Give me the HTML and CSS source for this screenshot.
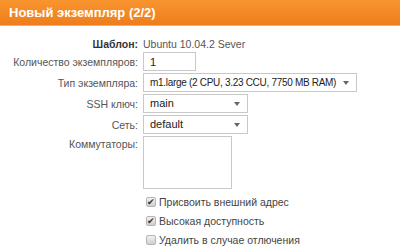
FILE: index.html
```html
<!DOCTYPE html>
<html lang="ru">
<head>
  <meta charset="utf-8">
  <title>Новый экземпляр</title>
  <link rel="stylesheet" href="styles.css">
</head>
<body>
  <div class="dialog">
    <h1 class="title">Новый экземпляр (2/2)</h1>

    <form class="form">
      <div class="row">
        <span class="label strong">Шаблон:</span>
        <span class="value">Ubuntu 10.04.2 Sever</span>
      </div>
      <div class="row">
        <label class="label" for="count">Количество экземпляров:</label>
        <input class="field count" id="count" type="text" value="1">
      </div>
      <div class="row">
        <label class="label">Тип экземпляра:</label>
        <div class="select wide">m1.large (2 CPU, 3.23 CCU, 7750 MB RAM)</div>
      </div>
      <div class="row">
        <label class="label">SSH ключ:</label>
        <div class="select">main</div>
      </div>
      <div class="row">
        <label class="label">Сеть:</label>
        <div class="select">default</div>
      </div>
      <div class="row">
        <label class="label top">Коммутаторы:</label>
        <div class="list"></div>
      </div>

      <div class="checks">
        <div class="check"><span class="box on">✔</span>Присвоить внешний адрес</div>
        <div class="check"><span class="box on">✔</span>Высокая доступность</div>
        <div class="check"><span class="box"></span>Удалить в случае отлючения</div>
      </div>
    </form>
  </div>
</body>
</html>
```

FILE: styles.css
```css
html {
  box-sizing: border-box;
}

*, *:before, *:after {
  box-sizing: inherit;
}

body {
  margin: 0;
  background: #fff;
  font-family: 'Liberation Sans', Arial, sans-serif;
  font-size: 10.5px;
  color: #333;
}

.title {
  margin: 0;
  height: 26px;
  padding: 0 9px;
  line-height: 25px;
  font-size: 13px;
  font-weight: 700;
  color: #fff;
  background: linear-gradient(#f8952f, #ef7d1c);
  border-bottom: 1px solid #f9ad72;
}

.form {
  padding-top: 11px;
}

.row {
  display: grid;
  grid-template-columns: 138px auto;
  column-gap: 5px;
  align-items: center;
  margin-bottom: 2px;
}

.label {
  text-align: right;
  white-space: nowrap;
  color: #555;
}

.label.top {
  align-self: start;
  padding-top: 2px;
}

.strong {
  font-weight: 700;
  color: #333;
}

.value {
  color: #555;
}

.row:first-child {
  margin-bottom: 1px;
  height: 14px;
}

.field,
.select,
.list {
  height: 19px;
  border: 1px solid #c8c8c8;
  background: #fff;
  font-family: inherit;
  font-size: 11px;
  color: #222;
}

.field {
  width: 53px;
  padding: 0 6px;
  outline: none;
}

.select {
  position: relative;
  width: 105px;
  padding: 0 16px 0 6px;
  line-height: 17px;
  white-space: nowrap;
  overflow: hidden;
}

.select.wide {
  width: 214px;
  font-size: 10px;
  letter-spacing: -0.3px;
}

.select:after {
  content: "";
  position: absolute;
  right: 7px;
  top: 7px;
  border-left: 3px solid transparent;
  border-right: 3px solid transparent;
  border-top: 4px solid #666;
}

.list {
  width: 89px;
  height: 53px;
}

.checks {
  padding: 1px 0 0 146px;
}

.check {
  display: flex;
  align-items: center;
  height: 19px;
  color: #444;
}

.box {
  width: 10px;
  height: 10px;
  margin-right: 3px;
  border: 1px solid #b5b5b5;
  border-radius: 2px;
  background: linear-gradient(#f2f2f2, #cfcfcf);
  font-size: 9px;
  line-height: 9px;
  text-align: center;
  color: #333;
}
```
